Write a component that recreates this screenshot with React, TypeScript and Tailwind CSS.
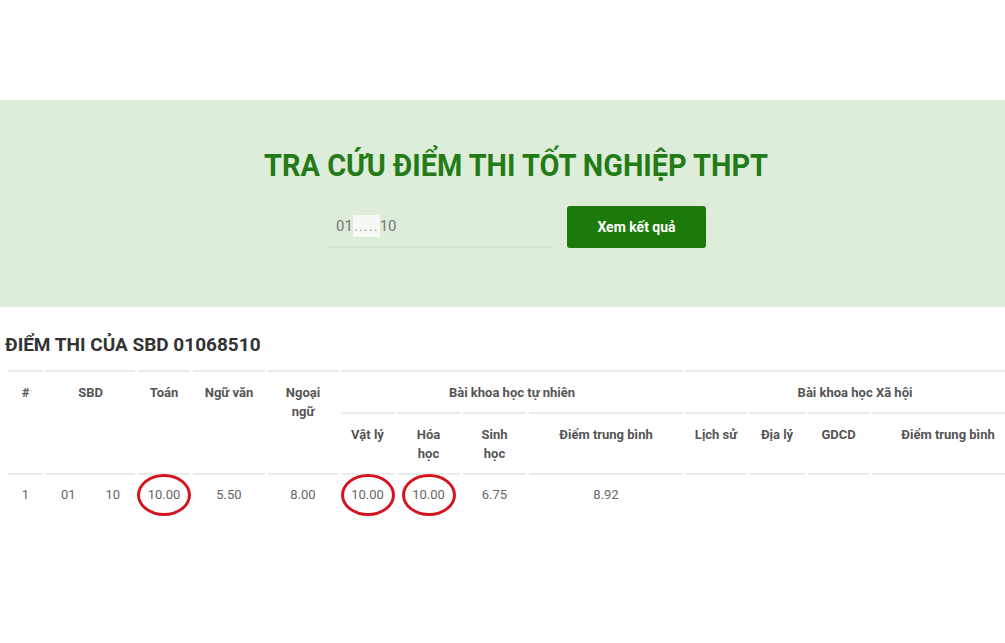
import React from "react";

const Circle = () => (
  <span className="pointer-events-none absolute left-1/2 top-1/2 h-[42px] w-[54px] -translate-x-1/2 -translate-y-1/2 rounded-[50%] border-[3px] border-[#d4141f]" />
);

const th = "border-t-2 border-[#e9ecea] text-center align-top font-bold text-[#555] text-[13px] leading-[19px]";
const td = "border-t-2 border-[#e9ecea] text-center align-top text-[#666] text-[13px] leading-[19px] pt-[10px] pb-[10px]";

export default function App() {
  return (
    <div className="w-[1005px] h-[643px] overflow-hidden bg-white" style={{ fontFamily: "Roboto, 'Noto Sans', sans-serif" }}>
      <div className="h-[100px]" />
      <div className="h-[207px] bg-[#deedd9] flex flex-col items-center pl-[28px]">
        <h1 className="mt-[47px] text-[31px] leading-[38px] font-bold text-[#237b18] scale-x-[0.933] whitespace-nowrap">
          TRA CỨU ĐIỂM THI TỐT NGHIỆP THPT
        </h1>
        <div className="mt-[21px] flex items-end gap-[14px]">
          <div className="w-[226px] h-[42px] border-b-2 border-[#d3e4ce] flex items-center pl-[9px] text-[15px] text-[#777]">
            <span>01</span>
            <span className="bg-[#f6f9f5] text-[#999] tracking-[1px] px-[1px]">.....</span>
            <span>10</span>
          </div>
          <button className="w-[139px] h-[42px] rounded-[3px] bg-[#1c7a0b] text-white text-[14px] font-bold">
            Xem kết quả
          </button>
        </div>
      </div>
      <div className="pl-[5px] pt-[26px]">
        <h2 className="text-[19px] leading-[24px] font-bold text-[#333]">ĐIỂM THI CỦA SBD 01068510</h2>
        <table className="mt-[13px] table-fixed border-separate border-spacing-x-[3px] border-spacing-y-0 w-[1022px]">
          <colgroup>
            <col className="w-[35px]" />
            <col className="w-[89px]" />
            <col className="w-[52px]" />
            <col className="w-[72px]" />
            <col className="w-[70px]" />
            <col className="w-[53px]" />
            <col className="w-[63px]" />
            <col className="w-[63px]" />
            <col className="w-[154px]" />
            <col className="w-[60px]" />
            <col className="w-[56px]" />
            <col className="w-[61px]" />
            <col className="w-[152px]" />
          </colgroup>
          <thead>
            <tr>
              <th rowSpan={2} className={`${th} pt-[11px]`}>#</th>
              <th rowSpan={2} className={`${th} pt-[11px]`}>SBD</th>
              <th rowSpan={2} className={`${th} pt-[11px]`}>Toán</th>
              <th rowSpan={2} className={`${th} pt-[11px]`}>Ngữ văn</th>
              <th rowSpan={2} className={`${th} pt-[11px] px-[16px]`}>Ngoại ngữ</th>
              <th colSpan={4} className={`${th} pt-[11px] pb-[10px]`}>Bài khoa học tự nhiên</th>
              <th colSpan={4} className={`${th} pt-[11px] pb-[10px]`}>Bài khoa học Xã hội</th>
            </tr>
            <tr>
              <th className={`${th} pt-[11px] pb-[10px]`}>Vật lý</th>
              <th className={`${th} pt-[11px] pb-[10px] px-[16px]`}>Hóa học</th>
              <th className={`${th} pt-[11px] pb-[10px] px-[16px]`}>Sinh học</th>
              <th className={`${th} pt-[11px] pb-[10px]`}>Điểm trung bình</th>
              <th className={`${th} pt-[11px] pb-[10px]`}>Lịch sử</th>
              <th className={`${th} pt-[11px] pb-[10px]`}>Địa lý</th>
              <th className={`${th} pt-[11px] pb-[10px]`}>GDCD</th>
              <th className={`${th} pt-[11px] pb-[10px]`}>Điểm trung bình</th>
            </tr>
          </thead>
          <tbody>
            <tr>
              <td className={td}>1</td>
              <td className={td}>
                <span>01</span>
                <span className="inline-block w-[30px]" />
                <span>10</span>
              </td>
              <td className={`${td} relative`}>10.00<Circle /></td>
              <td className={td}>5.50</td>
              <td className={td}>8.00</td>
              <td className={`${td} relative`}>10.00<Circle /></td>
              <td className={`${td} relative`}>10.00<Circle /></td>
              <td className={td}>6.75</td>
              <td className={td}>8.92</td>
              <td className={td}></td>
              <td className={td}></td>
              <td className={td}></td>
              <td className={td}></td>
            </tr>
          </tbody>
        </table>
      </div>
    </div>
  );
}
